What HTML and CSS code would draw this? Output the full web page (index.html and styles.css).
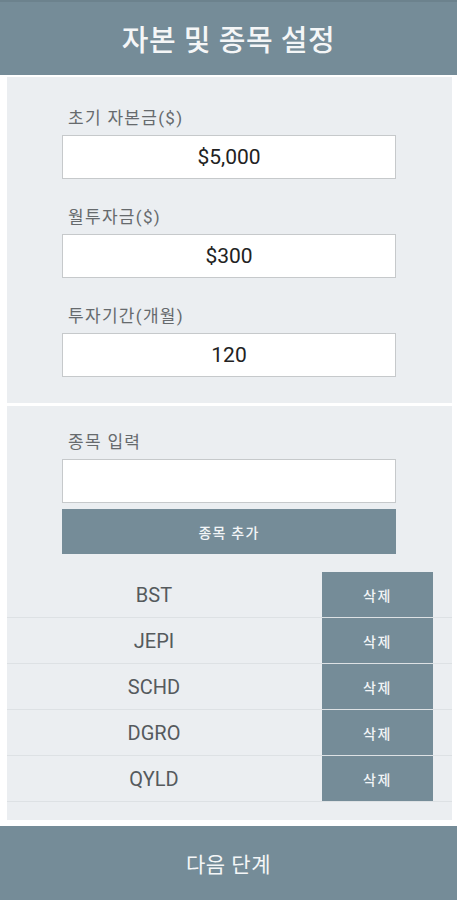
FILE: index.html
```html
<!DOCTYPE html>
<html lang="ko">
<head>
<meta charset="utf-8">
<title>자본 및 종목 설정</title>
<link rel="stylesheet" href="styles.css">
</head>
<body>
<header class="topbar">자본 및 종목 설정</header>
<main class="content">
  <section class="panel panel-capital">
    <div class="field">
      <label class="field-label">초기 자본금($)</label>
      <input class="field-input" type="text" value="$5,000">
    </div>
    <div class="field">
      <label class="field-label">월투자금($)</label>
      <input class="field-input" type="text" value="$300">
    </div>
    <div class="field">
      <label class="field-label">투자기간(개월)</label>
      <input class="field-input" type="text" value="120">
    </div>
  </section>
  <section class="panel panel-stocks">
    <div class="stock-form">
      <div class="field">
        <label class="field-label">종목 입력</label>
        <input class="field-input" type="text" value="">
      </div>
      <button class="add-btn">종목 추가</button>
    </div>
    <ul class="stock-list">
      <li class="stock-row"><span class="stock-name">BST</span><button class="del-btn">삭제</button></li>
      <li class="stock-row"><span class="stock-name">JEPI</span><button class="del-btn">삭제</button></li>
      <li class="stock-row"><span class="stock-name">SCHD</span><button class="del-btn">삭제</button></li>
      <li class="stock-row"><span class="stock-name">DGRO</span><button class="del-btn">삭제</button></li>
      <li class="stock-row"><span class="stock-name">QYLD</span><button class="del-btn">삭제</button></li>
    </ul>
  </section>
</main>
<footer class="bottombar">다음 단계</footer>
</body>
</html>
```
FILE: styles.css
```css
* { box-sizing: border-box; }

html, body {
  margin: 0;
  padding: 0;
  background: #ffffff;
  font-family: Roboto, "Noto Sans CJK KR", sans-serif;
}

body {
  width: 457px;
  height: 900px;
  display: flex;
  flex-direction: column;
}

.topbar {
  height: 75px;
  flex: none;
  background: #758c98;
  border-top: 2px solid #6c828d;
  color: #f4f6f7;
  font-size: 29px;
  font-weight: 500;
  letter-spacing: 0.5px;
  display: flex;
  align-items: center;
  justify-content: center;
  padding-bottom: 2px;
}

.content {
  flex: 1;
  display: flex;
  flex-direction: column;
  gap: 3px;
  padding: 2px 5px 6px 7px;
}

.panel {
  background: #ebeef1;
}

.panel-capital {
  padding: 30px 56px 26px 55px;
  display: flex;
  flex-direction: column;
  gap: 27px;
}

.field {
  display: flex;
  flex-direction: column;
  gap: 6px;
}

.field-label {
  font-size: 17px;
  line-height: 22px;
  letter-spacing: 1.3px;
  color: #666a6d;
  padding-left: 6px;
}

.field-input {
  height: 44px;
  width: 100%;
  border: 1px solid #c6c9cb;
  background: #ffffff;
  font-family: Roboto, "Noto Sans CJK KR", sans-serif;
  font-size: 21px;
  color: #222222;
  text-align: center;
  outline: none;
  margin: 0;
  padding: 0;
}

.panel-stocks {
  flex: 1;
  padding: 25px 0 18px 0;
  display: flex;
  flex-direction: column;
}

.stock-form {
  padding: 0 56px 0 55px;
  display: flex;
  flex-direction: column;
  gap: 6px;
}

.add-btn {
  height: 45px;
  border: none;
  background: #758c98;
  color: #f2f5f7;
  font-family: Roboto, "Noto Sans CJK KR", sans-serif;
  font-size: 14px;
  font-weight: 500;
  letter-spacing: 1.2px;
  padding: 0;
}

.stock-list {
  list-style: none;
  margin: 18px 0 0 0;
  padding: 0;
}

.stock-row {
  display: flex;
  align-items: stretch;
  height: 46px;
  border-bottom: 1px solid #dde1e4;
}

.stock-name {
  width: 294px;
  display: flex;
  align-items: center;
  justify-content: center;
  font-size: 20px;
  color: #555a5d;
}

.del-btn {
  margin-left: 21px;
  width: 111px;
  border: none;
  background: #758c98;
  color: #f2f5f7;
  font-family: Roboto, "Noto Sans CJK KR", sans-serif;
  font-size: 14px;
  font-weight: 500;
  letter-spacing: 1.5px;
  padding: 0;
}

.bottombar {
  height: 74px;
  flex: none;
  background: #758c98;
  color: #f4f6f7;
  font-size: 21px;
  letter-spacing: 0.5px;
  display: flex;
  align-items: center;
  justify-content: center;
}
```
